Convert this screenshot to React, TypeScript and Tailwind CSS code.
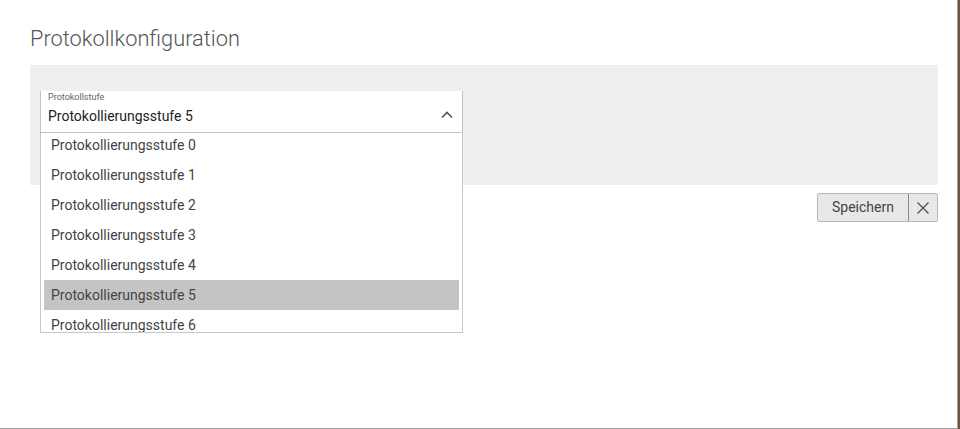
import React from "react";

const items = [0, 1, 2, 3, 4, 5, 6];

export default function App() {
  return (
    <div className="w-[960px] h-[429px] flex bg-white overflow-hidden" style={{ fontFamily: "Roboto, 'Liberation Sans', sans-serif" }}>
      <div className="flex-1 h-full border-r border-b border-[#a0a0a0] pl-[30px] pr-[19px] flex flex-col">
        <h1 className="mt-[25px] h-[28px] leading-[28px] text-[21.8px] font-light text-[#555]">Protokollkonfiguration</h1>
        <div className="mt-[12px] h-[120px] bg-[#efefef] pl-[10px] pt-[26px]">
          <div className="relative w-[423px]">
            <div className="h-[42px] bg-white border-x border-b border-[#c2c2c2] pl-[7px] pr-[8px] flex items-start justify-between">
              <div className="flex flex-col">
                <span className="text-[9px] leading-[12px] text-[#666]">Protokollstufe</span>
                <span className="text-[14px] leading-[18px] text-[#222] mt-[4px]">Protokollierungsstufe 5</span>
              </div>
              <svg width="14" height="10" viewBox="0 0 14 10" className="mt-[19px]">
                <path d="M2 7.5 L7 2.5 L12 7.5" fill="none" stroke="#555" strokeWidth="1.6" />
              </svg>
            </div>
            <div className="absolute left-0 top-full w-full h-[200px] bg-white border-x border-b border-[#c8c8c8] overflow-hidden px-[3px] z-10">
              <div className="-mt-[3px]">
                {items.map((i) => (
                  <div
                    key={i}
                    className={
                      i === 5
                        ? "h-[30px] leading-[30px] pl-[7px] text-[14px] text-[#444] bg-[#c4c4c4]"
                        : "h-[30px] leading-[30px] pl-[7px] text-[14px] text-[#444]"
                    }
                  >
                    Protokollierungsstufe {i}
                  </div>
                ))}
              </div>
            </div>
          </div>
        </div>
        <div className="mt-[8px] flex justify-end">
          <div className="flex h-[29px] border border-[#b8b8b8] rounded-[2px] bg-[#e8e8e8]">
            <button className="w-[91px] h-full text-[14px] text-[#444] border-r border-[#8a8a8a]">Speichern</button>
            <button className="w-[28px] h-full flex items-center justify-center">
              <svg width="14" height="14" viewBox="0 0 14 14">
                <path d="M1.5 1.5 L12.5 12.5 M12.5 1.5 L1.5 12.5" stroke="#555" strokeWidth="1.4" fill="none" />
              </svg>
            </button>
          </div>
        </div>
      </div>
      <div className="w-[2px] h-full bg-[#6b5442]" />
    </div>
  );
}
